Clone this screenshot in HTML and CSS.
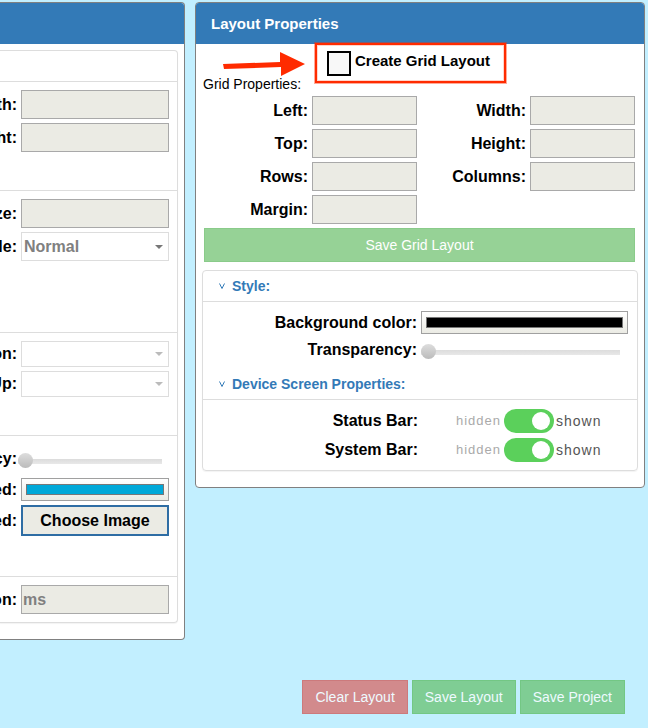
FILE: index.html
```html
<!DOCTYPE html>
<html lang="en">
<head>
<meta charset="utf-8">
<title>Layout Properties</title>
<link rel="stylesheet" href="styles.css">
</head>
<body>
<main class="workspace">
  <section class="panel panel-left">
    <div class="panel-head"></div>
    <div class="card card-left">
      <div class="group-head"></div>
      <div class="group group-size">
        <div class="field"><label for="w">Width:</label><input class="text" id="w" type="text"></div>
        <div class="field"><label for="h">Height:</label><input class="text" id="h" type="text"></div>
      </div>
      <div class="group group-font">
        <div class="field"><label for="fs">Size:</label><input class="text" id="fs" type="text"></div>
        <div class="field"><label for="st">Style:</label><span class="select"><select id="st"><option>Normal</option></select></span></div>
      </div>
      <div class="group group-action">
        <div class="field"><label for="an">Button:</label><span class="select empty"><select id="an"><option></option></select></span></div>
        <div class="field"><label for="up">Up:</label><span class="select empty"><select id="up"><option></option></select></span></div>
      </div>
      <div class="group group-look">
        <div class="field field-range"><label for="tr">Transparency:</label><input id="tr" type="range" value="0"></div>
        <div class="field"><label for="pc">Pressed:</label><input id="pc" type="color" value="#00a8d8"></div>
        <div class="field"><label for="pi">Pressed:</label><button class="choose" id="pi" type="button">Choose Image</button></div>
      </div>
      <div class="group group-time">
        <div class="field"><label for="du">Duration:</label><input class="text" id="du" type="text" placeholder="ms"></div>
      </div>
    </div>
  </section>

  <section class="panel panel-right">
    <h2 class="panel-head">Layout Properties</h2>
    <div class="create-row">
      <div class="create-box">
        <input id="grid" type="checkbox"><label for="grid">Create Grid Layout</label>
      </div>
      <svg class="arrow" viewBox="0 0 82 28" aria-hidden="true"><path d="M0 13 57 11V1L82 13 58 25V16L1 18Z" fill="#ff2b00"/></svg>
    </div>
    <p class="caption">Grid Properties:</p>
    <div class="grid-fields">
      <div class="field"><label for="gl">Left:</label><input class="text" id="gl" type="text"></div>
      <div class="field"><label for="gw">Width:</label><input class="text" id="gw" type="text"></div>
      <div class="field"><label for="gt">Top:</label><input class="text" id="gt" type="text"></div>
      <div class="field"><label for="gh">Height:</label><input class="text" id="gh" type="text"></div>
      <div class="field"><label for="gr">Rows:</label><input class="text" id="gr" type="text"></div>
      <div class="field"><label for="gc">Columns:</label><input class="text" id="gc" type="text"></div>
      <div class="field"><label for="gm">Margin:</label><input class="text" id="gm" type="text"></div>
    </div>
    <button class="save-grid" type="button">Save Grid Layout</button>
    <div class="card card-right">
      <h3 class="group-head"><svg viewBox="0 0 6 6" aria-hidden="true"><path d="M.5.5 3 5.5 5.5.5"/></svg>Style:</h3>
      <div class="group style-fields">
        <div class="field"><label for="bg">Background color:</label><input id="bg" type="color" value="#000000"></div>
        <div class="field field-range"><label for="bt">Transparency:</label><input id="bt" type="range" value="0"></div>
      </div>
      <h3 class="group-head"><svg viewBox="0 0 6 6" aria-hidden="true"><path d="M.5.5 3 5.5 5.5.5"/></svg>Device Screen Properties:</h3>
      <div class="group bars">
        <div class="bar"><label for="sb">Status Bar:</label><span class="off">hidden</span><input class="switch" id="sb" type="checkbox" checked><span class="on">shown</span></div>
        <div class="bar"><label for="yb">System Bar:</label><span class="off">hidden</span><input class="switch" id="yb" type="checkbox" checked><span class="on">shown</span></div>
      </div>
    </div>
  </section>
</main>
<footer class="actions">
  <button class="clear" type="button">Clear Layout</button>
  <button type="button">Save Layout</button>
  <button type="button">Save Project</button>
</footer>
</body>
</html>
```
FILE: styles.css
```css
* { box-sizing: border-box; }

body {
  margin: 0;
  background: #c2efff;
  color: #000;
  font: 16px/20px "Liberation Sans", Arial, sans-serif;
  overflow-x: hidden;
}

input, select, button { margin: 0; font: inherit; border-radius: 0; }

.workspace {
  display: grid;
  grid-template-columns: 185fr 450fr;
  gap: 10px;
  align-items: start;
  padding: 2px 3px 0 0;
}

/* Panels */
.panel {
  min-width: 0;
  background: #fff;
  border: 1px solid #808080;
  border-radius: 4px;
}
.panel-left {
  border-left: 0;
  border-top-left-radius: 0;
  border-bottom-left-radius: 0;
  padding-bottom: 16px;
}
.panel-right { padding-bottom: 16px; }

.panel-head {
  height: 41px;
  margin: 0;
  padding: 0 15px;
  background: #337ab7;
  border-radius: 3px 3px 0 0;
  color: #fff;
  font-size: 15px;
  font-weight: bold;
  line-height: 41px;
}
.panel-left .panel-head { border-top-left-radius: 0; }

.card {
  border: 1px solid #ddd;
  border-radius: 4px;
  box-shadow: 0 1px 1px rgba(0, 0, 0, .05);
}
.card-left {
  margin: 6px 6px 0 0;
  border-left: 0;
  border-top-left-radius: 0;
  border-bottom-left-radius: 0;
}
.card-right { margin: 8px 6px 0; }

.group-head {
  display: flex;
  align-items: center;
  height: 30px;
  margin: 0;
  padding: 0 16px;
  color: #337ab7;
  font-size: 14px;
  font-weight: bold;
}
.group-head svg {
  width: 6px;
  height: 6px;
  margin-right: 7px;
  fill: none;
  stroke: #337ab7;
}

.group {
  display: flex;
  flex-direction: column;
  gap: 4px;
  border-top: 1px solid #ddd;
  padding-top: 8px;
}
.card-left .group { padding-right: 8px; }
.group-size { padding-bottom: 38px; }
.group-font { padding-bottom: 71px; }
.group-action { padding-bottom: 38px; }
.group-look { padding-bottom: 40px; }
.group-time { padding-bottom: 8px; }

/* Fields */
.field {
  display: flex;
  align-items: center;
  gap: 4px;
}
.field label, .bar label {
  font-weight: bold;
  white-space: nowrap;
}
/* Labels run out past the window's left edge */
.card-left label {
  display: flex;
  flex: 0 0 17px;
  min-width: 0;
  justify-content: flex-end;
}
.card-left .field > :last-child { flex: 1; min-width: 0; }

.text {
  height: 29px;
  padding: 1px;
  background: #ebebe4;
  border: 1px solid #a9a9a9;
  font-weight: bold;
}
.text::placeholder { color: #808080; }

.select { position: relative; height: 29px; }
.select select {
  display: block;
  width: 100%;
  height: 100%;
  padding: 0 2px;
  appearance: none;
  background: #fff;
  border: 1px solid #ddd;
  color: #808080;
  font-weight: bold;
}
.select::after {
  content: "";
  position: absolute;
  top: 50%;
  right: 6px;
  margin-top: -2px;
  border: 4px solid transparent;
  border-top-color: #777;
  border-bottom: 0;
  pointer-events: none;
}
.select.empty { height: 26px; }
.select.empty::after { border-top-color: #bbb; }

input[type="color"] {
  height: 23px;
  padding: 5px 4px;
  appearance: none;
  background: linear-gradient(#fff, #ebebe4);
  border: 1px solid #a0a0a0;
}
input[type="color"]::-webkit-color-swatch-wrapper { padding: 0; }
input[type="color"]::-webkit-color-swatch {
  border: 1px solid #777;
  border-radius: 0;
}

input[type="range"] {
  height: 23px;
  padding-top: 6px;
  appearance: none;
  background: none;
}
input[type="range"]::-webkit-slider-runnable-track {
  height: 5px;
  background: linear-gradient(#dcdcdc, #e8e8e8);
}
input[type="range"]::-webkit-slider-thumb {
  appearance: none;
  width: 15px;
  height: 15px;
  margin-top: -6px;
  border-radius: 50%;
  background: linear-gradient(#ddd, #bbb);
}
.card-left .field-range { gap: 1px; padding: 3px 7px 4px 0; }

.choose {
  height: 31px;
  padding: 0;
  background: #ebebe4;
  border: 2px solid #2e6da4;
  color: #000;
  font-weight: bold;
}

/* Grid creation */
.create-row {
  position: relative;
  display: flex;
  margin: -1px 0 0 119px;
}
.create-box {
  display: flex;
  align-items: center;
  gap: 4px;
  height: 40px;
  padding: 0 14px 0 10px;
  border: 2px solid #ff2b00;
  box-shadow: 0 0 0 1px rgba(255, 43, 0, .4), inset 0 0 0 1px rgba(255, 43, 0, .2);
  font-size: 15px;
  font-weight: bold;
  white-space: nowrap;
}
.create-box input {
  width: 24px;
  height: 25px;
  appearance: none;
  background: #f8f8f8;
  border: 2px solid #000;
}
.create-box label { padding-bottom: 4px; }
.arrow {
  position: absolute;
  left: -92px;
  top: 8px;
  width: 82px;
  height: 28px;
}
.caption {
  margin: -9px 0 0 7px;
  font-size: 14px;
}
.grid-fields {
  display: grid;
  grid-template-columns: 213fr 218fr;
  gap: 4px 0;
  margin: 2px 9px 0 8px;
}
.grid-fields .field { justify-content: flex-end; }
.grid-fields .text { width: 105px; }

button { white-space: nowrap; }
.save-grid {
  display: block;
  width: calc(100% - 17px);
  height: 34px;
  margin: 4px 9px 0 8px;
  background: #96d296;
  border: 1px solid #8acb8a;
  color: #fff;
  font-size: 14px;
}

.style-fields { padding: 9px 9px 8px; }
.style-fields .field {
  display: grid;
  grid-template-columns: 205fr 207fr;
}
.style-fields label { text-align: right; }
.style-fields input { width: 100%; min-width: 0; }
.style-fields input[type="range"] { padding-right: 8px; }

.bars { gap: 5px; padding: 9px 0 8px; }
.bar {
  display: flex;
  align-items: center;
  height: 24px;
}
.bar label {
  flex: 0 0 215px;
  margin-right: 38px;
  text-align: right;
}
.off, .on { letter-spacing: 1px; }
.off { width: 48px; color: #aaa; font-size: 13px; }
.on { margin-left: 2px; color: #555; font-size: 14px; }
.switch {
  display: flex;
  align-items: center;
  justify-content: flex-end;
  width: 50px;
  height: 24px;
  padding: 0 4px;
  appearance: none;
  background: #5bd05b;
  border-radius: 12px;
}
.switch::after {
  content: "";
  width: 18px;
  height: 18px;
  border-radius: 50%;
  background: #fff;
}

/* Page actions */
.actions {
  display: flex;
  justify-content: flex-end;
  gap: 4px;
  padding: 40px 23px 14px 0;
}
.actions button {
  height: 34px;
  padding: 0 12px;
  background: #7fcd94;
  border: 1px solid #73c784;
  color: #eefaff;
  font-size: 14px;
}
.actions .clear {
  background: #d28a8c;
  border-color: #cc7a7c;
}
```
